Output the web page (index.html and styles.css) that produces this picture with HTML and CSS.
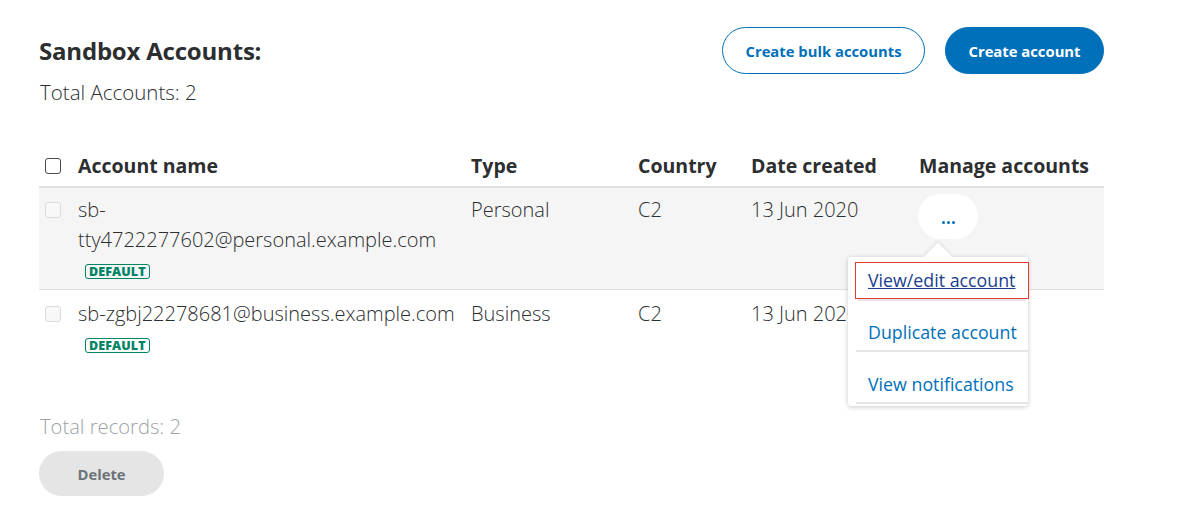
FILE: index.html
```html
<!DOCTYPE html>
<html>
<head>
<meta charset="utf-8">
<link rel="stylesheet" href="styles.css">
</head>
<body>
<div class="page">
  <div class="top">
    <div class="titles">
      <h1 class="title">Sandbox Accounts:</h1>
      <div class="total">Total Accounts: 2</div>
    </div>
    <div class="actions">
      <button class="btn btn-outline">Create bulk accounts</button>
      <button class="btn btn-primary">Create account</button>
    </div>
  </div>

  <table class="grid">
    <colgroup>
      <col class="c-check"><col class="c-name"><col class="c-type"><col class="c-country"><col class="c-date"><col class="c-manage">
    </colgroup>
    <thead>
      <tr>
        <th><span class="cb cb-head"></span></th>
        <th>Account name</th>
        <th>Type</th>
        <th>Country</th>
        <th>Date created</th>
        <th>Manage accounts</th>
      </tr>
    </thead>
    <tbody>
      <tr class="row-active">
        <td><span class="cb cb-row"></span></td>
        <td><div class="email">sb-<br>tty4722277602@personal.example.com</div><span class="badge">DEFAULT</span></td>
        <td>Personal</td>
        <td>C2</td>
        <td>13 Jun 2020</td>
        <td class="manage">
          <div class="menu-wrap">
            <button class="dots"><span></span><span></span><span></span></button>
            <div class="menu">
              <div class="arrow"></div>
              <a class="item item-focus">View/edit account</a>
              <a class="item">Duplicate account</a>
              <a class="item item-last">View notifications</a>
            </div>
          </div>
        </td>
      </tr>
      <tr>
        <td><span class="cb cb-row"></span></td>
        <td><div class="email">sb-zgbj22278681@business.example.com</div><span class="badge">DEFAULT</span></td>
        <td>Business</td>
        <td>C2</td>
        <td>13 Jun 2020</td>
        <td></td>
      </tr>
    </tbody>
  </table>

  <div class="records">Total records: 2</div>
  <button class="btn btn-delete">Delete</button>
</div>
</body>
</html>
```
FILE: styles.css
```css
* { box-sizing: border-box; }
body {
  margin: 0;
  font-family: "Open Sans", "Noto Sans", sans-serif;
  color: #2c2e2f;
  background: #fff;
}
.page {
  width: 1104px;
  padding: 27px 0 0 39px;
}
.top {
  display: flex;
  justify-content: space-between;
  align-items: flex-start;
}
.title {
  margin: 9px 0 0 0;
  font-size: 24px;
  font-weight: 700;
  line-height: 30px;
  color: #2c2e2f;
  letter-spacing: -0.2px;
}
.total {
  margin-top: 14px;
  font-size: 20.5px;
  font-weight: 300;
  line-height: 24px;
  color: #2c2e2f;
  padding-left: 1px;
}
.actions {
  display: flex;
  gap: 20px;
}
.btn {
  font-family: inherit;
  font-size: 14.8px;
  font-weight: 700;
  height: 47px;
  border-radius: 24px;
  cursor: pointer;
  padding: 0;
}
.btn-outline {
  width: 203px;
  background: #fff;
  color: #0070ba;
  border: 1px solid #0070ba;
}
.btn-primary {
  width: 159px;
  background: #0070ba;
  color: #fff;
  border: 1px solid #0070ba;
}
.grid {
  margin-top: 41px;
  width: 1065px;
  border-collapse: collapse;
  table-layout: fixed;
}
.c-check { width: 39px; }
.c-name { width: 393px; }
.c-type { width: 167px; }
.c-country { width: 113px; }
.c-date { width: 168px; }
.c-manage { width: 185px; }
.grid th {
  text-align: left;
  font-size: 19.5px;
  font-weight: 700;
  height: 42px;
  padding: 0;
  vertical-align: middle;
  border-bottom: 2px solid #e1e1e1;
  color: #2c2e2f;
}
.grid td {
  padding: 0;
  vertical-align: top;
  font-size: 20px;
  font-weight: 300;
  line-height: 30px;
  color: #2c2e2f;
}
.grid tbody tr:first-child td {
  padding-top: 7px;
  height: 102px;
  border-bottom: 1px solid #e0e0e0;
}
.grid tbody tr:first-child td.manage { padding-top: 6px; }
.grid tbody tr:nth-child(2) td {
  padding-top: 9px;
  height: 80px;
}
.row-active td { background: #f5f5f5; }
.cb {
  display: inline-block;
  width: 16px;
  height: 16px;
  border-radius: 3px;
  margin-left: 6px;
  vertical-align: middle;
}
.cb-head {
  border: 1px solid #4a4a4a;
  background: #fff;
  margin-top: -4px;
}
.cb-row {
  border: 1px solid #dcdcdc;
  background: #f8f8f8;
  margin-top: -3px;
}
.email { line-height: 30px; }
.badge {
  display: inline-block;
  margin: 9px 0 0 7px;
  padding: 0 3px;
  height: 15px;
  line-height: 13px;
  font-size: 12.5px;
  font-weight: 800;
  color: #008466;
  border: 1px solid #008466;
  border-radius: 3px;
  vertical-align: top;
  letter-spacing: 0.1px;
}
.manage { position: relative; }
.menu-wrap {
  position: relative;
}
.dots {
  width: 60px;
  height: 45px;
  border: none;
  border-radius: 23px;
  background: #fff;
  display: flex;
  align-items: center;
  justify-content: center;
  gap: 2px;
  padding-top: 12px;
  margin-left: -1px;
  cursor: pointer;
}
.dots span {
  width: 3px;
  height: 3px;
  border-radius: 50%;
  background: #0070ba;
}
.menu {
  position: absolute;
  top: 63px;
  left: -71px;
  width: 180px;
  background: #fff;
  border-radius: 3px;
  box-shadow: 0 1px 5px rgba(0,0,0,0.22);
  padding: 6px 0 2px 8px;
  z-index: 5;
}
.arrow {
  position: absolute;
  top: -10px;
  left: 80px;
  width: 20px;
  height: 20px;
  background: #fff;
  transform: rotate(45deg);
  box-shadow: -2px -2px 3px rgba(0,0,0,0.06);
}
.item {
  position: relative;
  display: block;
  font-size: 17.8px;
  font-weight: 400;
  line-height: 34px;
  height: 35px;
  padding-left: 12px;
  color: #0070ba;
  margin-bottom: 17px;
  box-shadow: 0 2px 0 0 #e6e6e6;
}
.item-last { margin-bottom: 2px; }
.item-focus {
  color: #1a3d8f;
  text-decoration: underline;
  outline: 1px solid #e53935;
  box-shadow: 0 5px 0 -2px #e6e6e6;
}
.records {
  margin-top: 45px;
  font-size: 20.2px;
  font-weight: 300;
  color: #9da3a6;
  line-height: 24px;
  padding-left: 1px;
}
.btn-delete {
  margin-top: 13px;
  width: 125px;
  height: 45px;
  background: #e5e5e5;
  color: #6c7378;
  border: none;
}
```
